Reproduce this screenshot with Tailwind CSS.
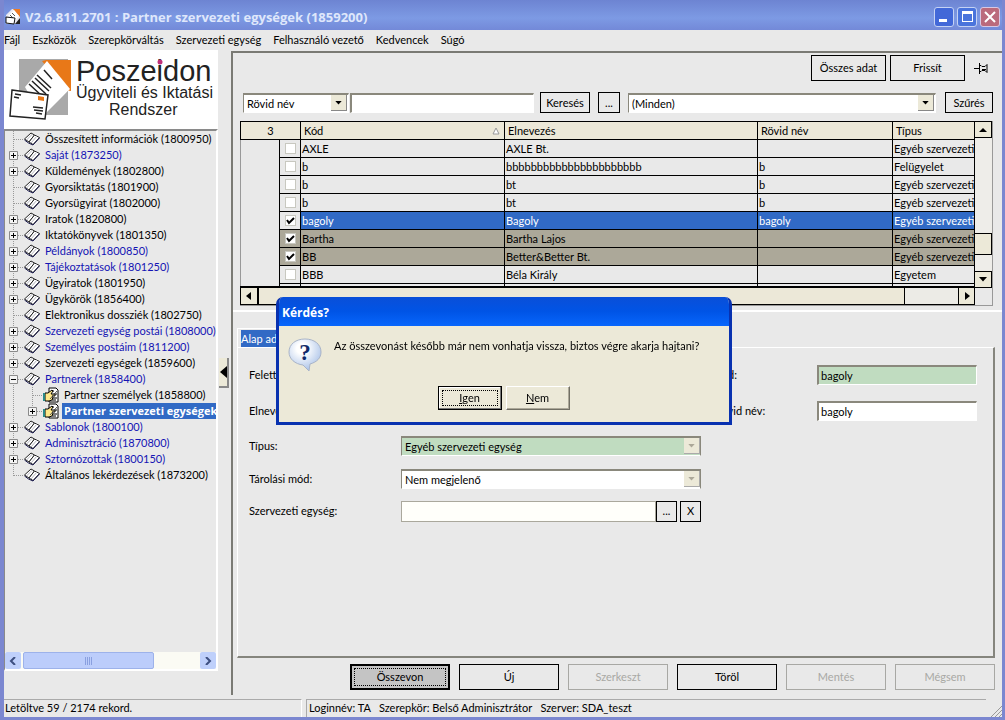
<!DOCTYPE html>
<html lang="hu">

<head>
    <meta charset="UTF-8">
    <meta name="viewport" content="width=device-width, initial-scale=1.0">
    <title>Partner szervezeti egységek</title>
    <script src="https://cdn.jsdelivr.net/npm/@tailwindcss/browser@4"></script>
</head>

<body class="h-screen flex flex-col overflow-hidden bg-[#e9e9e9] border-l-4 border-r-3 border-b-3 border-[#7b87d0] font-[Lato,sans-serif] text-[11px] leading-4 text-black">
    <svg class="hidden">
        <symbol id="book" viewBox="0 0 16 14">
            <path d="M.500 7 7 1l3.500 2L5 10z" fill="#fff" stroke="#222" />
            <path d="m5 10 5.500-7 5 2.500-6.500 7z" fill="#fff" stroke="#222" />
            <path d="m2.500 8 6-6M7 11l6-7" stroke="#b5b5bd" fill="none" />
            <path d="m.500 8 4 3 4.500 2 6.500-7" fill="none" stroke="#1c1c50" />
        </symbol>
        <symbol id="hand" viewBox="0 0 16 16">
            <path d="M6 1h7l2 2v12H6z" fill="#fff" stroke="#000" />
            <path d="M8 4h3M11 7h3M10 11h4M9 13h4" stroke="#000" />
            <path d="M2 6h3l4-3 1 1-2 3h4v2H9l1 1-1 3-3 1H2z" fill="#ffe98a" stroke="#000" />
            <path d="M0 6h2v8H0z" fill="#2a8a8a" />
            <path d="m7 12 7-8" stroke="#555" />
        </symbol>
        <symbol id="node-leaf" viewBox="0 0 19 16">
            <path d="M8.500 0v16M9 8.500h10" stroke="#999" stroke-dasharray="1 1" />
        </symbol>
        <symbol id="node-last" viewBox="0 0 19 16">
            <path d="M8.500 0v9M9 8.500h10" stroke="#999" stroke-dasharray="1 1" />
        </symbol>
        <symbol id="node-line" viewBox="0 0 19 16">
            <path d="M8.500 0v16" stroke="#999" stroke-dasharray="1 1" />
        </symbol>
        <symbol id="node-plus" viewBox="0 0 19 16">
            <path d="M8.500 0v16M9 8.500h10" stroke="#999" stroke-dasharray="1 1" />
            <path d="M4.500 4.500h8v8h-8z" fill="#f4f4f4" stroke="#8a8a8a" />
            <path d="M6 8.500h5M8.500 6v5" stroke="#000" />
        </symbol>
        <symbol id="node-minus" viewBox="0 0 19 16">
            <path d="M8.500 0v16M9 8.500h10" stroke="#999" stroke-dasharray="1 1" />
            <path d="M4.500 4.500h8v8h-8z" fill="#f4f4f4" stroke="#8a8a8a" />
            <path d="M6 8.500h5" stroke="#000" />
        </symbol>
        <symbol id="down" viewBox="0 0 8 5">
            <path d="M0 0h8L4 4.500z" fill="currentColor" />
        </symbol>
    </svg>

    <!-- title bar -->
    <header class="-ml-1 -mr-[3px] h-[30px] shrink-0 flex items-center pl-[5px] pr-[5px] pt-[3px] bg-linear-to-b from-[#6d84d2] via-[#7d9ae4] via-60% to-[#7389d8]">
        <svg class="w-4 h-4 mr-1" viewBox="0 0 16 16">
            <path d="M1 6 7 0h8v15H1z" fill="#e8e8f0" />
            <path d="M8 0h7v8z" fill="#ee7a22" />
            <path d="m3 7 6-6 5 6-5 6z" fill="#fff" />
            <path d="m5 6 3 3M7 4l3 3" stroke="#555" />
            <path d="m1 8 9 1-1 6-8-1z" fill="#fff" stroke="#111" />
            <path d="M10 15h5V9z" fill="#222" />
        </svg>
        <h1 class="flex-1 font-['Open_Sans',sans-serif] text-[13px] font-bold text-[#dfe7fb] whitespace-nowrap">V2.6.811.2701 : Partner szervezeti egységek (1859200)</h1>
        <div class="flex gap-[3px]">
            <button aria-label="Kis méret" class="w-5 h-5 rounded-[3px] border border-[#c5d2f4] bg-[#4268d8] flex items-end p-1"><span class="w-2 h-[3px] bg-white"></span></button>
            <button aria-label="Teljes méret" class="w-5 h-5 rounded-[3px] border border-[#c5d2f4] bg-[#4a74dc] flex items-center justify-center"><span class="w-[11px] h-[11px] border border-t-3 border-white"></span></button>
            <button aria-label="Bezárás" class="w-5 h-5 rounded-[3px] border border-[#d8c8e4] bg-[#bb6a7c] flex items-center justify-center">
                <svg class="w-3 h-3" viewBox="0 0 12 12"><path d="m1 1 10 10M11 1 1 11" stroke="#fff" stroke-width="2" /></svg>
            </button>
        </div>
    </header>

    <nav class="h-5 shrink-0 flex items-center gap-3 whitespace-nowrap">
        <a href="#">Fájl</a>
        <a href="#">Eszközök</a>
        <a href="#">Szerepkörváltás</a>
        <a href="#">Szervezeti egység</a>
        <a href="#">Felhasználó vezető</a>
        <a href="#">Kedvencek</a>
        <a href="#">Súgó</a>
    </nav>

    <main class="flex-1 min-h-0 flex pb-1">
        <!-- left side: logo and menu tree -->
        <aside class="w-[214px] shrink-0 flex flex-col pb-6">
            <div class="h-[79px] shrink-0 bg-white">
                <svg class="w-full h-[79px]" viewBox="0 0 214 79" font-family="Liberation Sans, Arial, sans-serif" fill="#222">
                    <path d="M15 9h49v56H15z" fill="#a9a9a9" />
                    <path d="M38 11 42 10h25v31l-6-1z" fill="#e87818" />
                    <path d="m21 37 22-26 23 28-26 26-10-12z" fill="#fff" />
                    <path d="M64 41v24H42z" fill="#a9a9a9" />
                    <path d="m25 34 13 12M28 31l14 13M31 28l14 13M33 25l14 13M40 20l8 9" stroke="#222" stroke-width="1.500" />
                    <path d="m8 40 36 5-3 24-35-3z" fill="#fff" stroke="#222" stroke-width="1.500" />
                    <path d="m11 44 6 1M10 47l5 1M29 57l10 1M30 60l9 1M32 63l6 1" stroke="#222" stroke-width="1.500" />
                    <path d="m34 46 6 1v4l-6-1z" fill="#e87818" />
                    <text x="72" y="31" font-size="29">Poszeidon</text>
                    <circle cx="156" cy="12" r="2.500" fill="#c0307a" />
                    <text x="72" y="48" font-size="16">Ügyviteli és Iktatási</text>
                    <text x="105" y="65" font-size="16">Rendszer</text>
                </svg>
            </div>
            <div class="flex-1 min-h-0 flex flex-col border-t-2 border-l border-[#8a8a8a] border-r-2 border-r-white border-b-2 border-b-white">
                <ul id="tree" class="flex-1 min-h-0 overflow-hidden whitespace-nowrap"></ul>
                <div class="h-[17px] shrink-0 flex bg-[#fbfbf4]">
                    <button aria-label="Balra" class="w-4 rounded-[2px] bg-[#bfd0fb] flex items-center justify-center">
                        <svg class="w-2 h-2" viewBox="0 0 8 8"><path d="M6 0 2 4l4 4" fill="none" stroke="#3d4f80" stroke-width="2" /></svg>
                    </button>
                    <div class="ml-0.5 w-[131px] rounded-[2px] border border-[#9db2ea] bg-[#bccdfb] flex items-center justify-center gap-px">
                        <span class="w-px h-2 bg-[#8aa0e0]"></span>
                        <span class="w-px h-2 bg-[#8aa0e0]"></span>
                        <span class="w-px h-2 bg-[#8aa0e0]"></span>
                        <span class="w-px h-2 bg-[#8aa0e0]"></span>
                    </div>
                    <button aria-label="Jobbra" class="ml-auto w-4 rounded-[2px] bg-[#bfd0fb] flex items-center justify-center">
                        <svg class="w-2 h-2" viewBox="0 0 8 8"><path d="m2 0 4 4-4 4" fill="none" stroke="#3d4f80" stroke-width="2" /></svg>
                    </button>
                </div>
            </div>
        </aside>

        <div class="w-[13px] shrink-0 flex items-center">
            <button aria-label="Menü elrejtése" class="ml-px w-[10px] h-[30px] border-r-2 border-b-2 border-[#888] bg-[#ece9d8] flex items-center justify-center">
                <svg class="w-[7px] h-3" viewBox="0 0 7 12"><path d="M7 0v12L0 6z" /></svg>
            </button>
        </div>

        <section class="flex-1 min-w-0 mt-px flex flex-col border-t-2 border-l-2 border-[#7a7a74]">
            <!-- search and result list -->
            <div class="h-[259px] shrink-0 pl-[7px] pr-[9px] border-b-2 border-white">
                <div class="h-[29px] flex items-center justify-end gap-1">
                    <button class="w-[75px] h-[26px] border border-black">Összes adat</button>
                    <button class="w-[75px] h-[26px] border border-black">Frissít</button>
                    <button aria-label="Rögzítés" class="ml-1 mr-1 w-4 h-4">
                        <svg class="w-4 h-4" viewBox="0 0 16 16" fill="none" stroke="#000">
                            <path d="M1 8.500h5M6.500 3v11M6 5.500h2l1 1h3l2-2v8l-2-2H9l-1 1H6M9 9.500h4" />
                        </svg>
                    </button>
                </div>
                <div class="h-[31px] flex items-end pl-[3px] mb-2">
                    <div class="relative w-[106px] shrink-0">
                        <select aria-label="Keresés mezője" class="block appearance-none w-full h-5 pl-[3px] bg-white border-t-2 border-l border-[#8a887c] border-r border-r-white border-b border-b-white">
                            <option>Rövid név</option>
                        </select>
                        <span class="absolute right-0.5 top-0.5 w-4 h-4 bg-[#ece9d8] border-r border-b border-[#888] flex items-center justify-center pointer-events-none"><svg class="w-[7px] h-1"><use href="#down" /></svg></span>
                    </div>
                    <input type="text" aria-label="Keresett szöveg" class="ml-px w-[184px] h-5 px-1 bg-white border-t-2 border-l-2 border-[#8a887c] border-r border-r-white border-b border-b-white">
                    <button class="ml-[6px] w-[50px] h-[21px] shrink-0 border border-black">Keresés</button>
                    <button class="ml-2 w-[22px] h-[21px] shrink-0 border border-black">...</button>
                    <div class="relative ml-2 flex-1">
                        <select aria-label="Szűrő" class="block appearance-none w-full h-5 pl-[3px] bg-white border-t-2 border-l border-[#8a887c] border-r border-r-white border-b border-b-white">
                            <option>(Minden)</option>
                        </select>
                        <span class="absolute right-0.5 top-0.5 w-4 h-4 bg-[#ece9d8] border-r border-b border-[#888] flex items-center justify-center pointer-events-none"><svg class="w-[7px] h-1"><use href="#down" /></svg></span>
                    </div>
                    <button class="ml-[9px] w-12 h-[21px] shrink-0 border border-black">Szűrés</button>
                </div>

                <div class="flex border-b border-r border-[#999]">
                    <div class="flex-1 min-w-0">
                        <div class="h-[167px] overflow-hidden border-b-2 border-black">
                            <table class="w-full table-fixed border-collapse whitespace-nowrap text-left">
                                <colgroup>
                                    <col class="w-[39px]">
                                    <col class="w-[21px]">
                                    <col class="w-[204px]">
                                    <col>
                                    <col class="w-[135px]">
                                    <col class="w-[82px]">
                                </colgroup>
                                <thead class="bg-[#ece8d8]">
                                    <tr class="h-[18px]">
                                        <th colspan="2" class="border border-black p-0 text-center font-normal">3</th>
                                        <th class="border border-black px-[3px] py-0 font-normal">
                                            <span class="flex items-center justify-between">Kód
                                                <svg class="w-2 h-2 mr-px" viewBox="0 0 8 8"><path d="m4 1 3 6H1z" fill="#fff" stroke="#999" /></svg>
                                            </span>
                                        </th>
                                        <th class="border border-black px-[3px] py-0 font-normal">Elnevezés</th>
                                        <th class="border border-black px-[3px] py-0 font-normal">Rövid név</th>
                                        <th class="border border-black px-[3px] py-0 font-normal">Típus</th>
                                    </tr>
                                </thead>
                                <tbody id="partnerTable"></tbody>
                            </table>
                        </div>
                        <div class="h-[17px] flex border border-t-0 border-black bg-[#ecebe6]">
                            <button aria-label="Balra" class="w-[18px] shrink-0 border-r-2 border-black bg-[#ece9d8] flex items-center justify-center"><svg class="w-[6px] h-2" viewBox="0 0 6 8"><path d="M5 0v8L0 4z" /></svg></button>
                            <div class="flex-1 border-r border-black bg-[#ece8d8]"></div>
                            <div class="w-[53px] shrink-0"></div>
                            <button aria-label="Jobbra" class="w-4 shrink-0 border-l border-black bg-[#ece9d8] flex items-center justify-center"><svg class="w-[6px] h-2" viewBox="0 0 6 8"><path d="M1 0v8l5-4z" /></svg></button>
                        </div>
                    </div>
                    <div class="w-[17px] h-[167px] shrink-0 flex flex-col bg-[#eeede9]">
                        <button aria-label="Fel" class="h-[17px] border border-l-0 border-black bg-[#ece9d8] flex items-center justify-center"><svg class="w-2 h-1" viewBox="0 0 8 4"><path d="M0 4h8L4 0z" /></svg></button>
                        <div class="mt-auto h-[22px] border border-l-0 border-black bg-[#ece9d8]"></div>
                        <div class="h-4"></div>
                        <button aria-label="Le" class="h-[17px] border border-l-0 border-black bg-[#ece9d8] flex items-center justify-center"><svg class="w-2 h-[5px]"><use href="#down" /></svg></button>
                    </div>
                </div>
            </div>

            <!-- details of the chosen unit -->
            <form class="flex-1 min-h-0 flex flex-col mt-[16px] ml-1 mr-[7px]" onsubmit="return false">
                <div class="h-[19px] shrink-0 border-t border-l border-white w-[100px] pt-px pl-[3px]"><button type="button" class="block w-full h-[18px] text-left bg-[#316ac5] text-white whitespace-nowrap">Alap adatok</button></div>
                <div class="flex-1 border-t border-l border-t-white border-l-white border-r-2 border-b-2 border-r-[#85857d] border-b-[#85857d]">
                    <div class="grid grid-cols-[152px_minmax(0,1fr)_116px_160px] grid-rows-[36px_36px_34px_32px_32px] items-center pl-[11px] pr-4 pt-[9px]">
                        <label for="parent">Felettes:</label>
                        <input id="parent" type="text" class="h-5 px-[2px] bg-[#c0dcc0] border-t-2 border-l-2 border-[#8a887c]">
                        <label for="code" class="pl-[14px]">Kód:</label>
                        <input id="code" type="text" value="bagoly" class="h-5 w-full pl-[2px] bg-[#c0dcc0] border-t-2 border-l-2 border-[#8a887c] border-r border-r-white border-b border-b-white">

                        <label for="name">Elnevezés:</label>
                        <input id="name" type="text" class="h-5 px-[2px] bg-white border-t-2 border-l-2 border-[#8a887c]">
                        <label for="short" class="pl-[14px]">Rövid név:</label>
                        <input id="short" type="text" value="bagoly" class="h-5 w-full pl-[2px] bg-white border-t-2 border-l-2 border-[#8a887c] border-r border-r-white border-b border-b-white">

                        <label for="type">Típus:</label>
                        <div class="relative">
                            <select id="type" class="block appearance-none w-full h-5 pl-[3px] bg-[#c0dcc0] border-t-2 border-l border-[#8a887c] border-r border-b border-b-white">
                                <option>Egyéb szervezeti egység</option>
                            </select>
                            <span class="absolute right-px top-0.5 w-4 h-4 bg-[#ece9d8] border-r border-b border-[#aaa] text-[#aca899] flex items-center justify-center pointer-events-none"><svg class="w-[7px] h-1"><use href="#down" /></svg></span>
                        </div>
                        <span class="col-span-2"></span>

                        <label for="storage">Tárolási mód:</label>
                        <div class="relative">
                            <select id="storage" class="block appearance-none w-full h-5 pl-[3px] bg-white border-t-2 border-l border-[#8a887c] border-r border-b border-b-white">
                                <option>Nem megjelenő</option>
                            </select>
                            <span class="absolute right-px top-0.5 w-4 h-4 bg-[#ece9d8] border-r border-b border-[#aaa] text-[#aca899] flex items-center justify-center pointer-events-none"><svg class="w-[7px] h-1"><use href="#down" /></svg></span>
                        </div>
                        <span class="col-span-2"></span>

                        <label for="unit">Szervezeti egység:</label>
                        <div class="flex">
                            <input id="unit" type="text" class="flex-1 min-w-0 h-[21px] px-1 bg-[#fffffa] border border-[#aaa89c]">
                            <button type="button" class="w-[21px] h-[21px] border border-black">...</button>
                            <button type="button" class="ml-[3px] w-[21px] h-[21px] border border-black">X</button>
                        </div>
                        <span class="col-span-2"></span>
                    </div>
                </div>
                <div class="h-[37px] shrink-0 flex items-start justify-end gap-[9px] pt-[6px]">
                    <button class="w-[100px] h-[26px] border-2 border-black bg-[#c4c4c4] p-0.5"><span class="flex h-full items-center justify-center border border-dotted border-black">Összevon</span></button>
                    <button class="w-[100px] h-[26px] border border-black">Új</button>
                    <button disabled class="w-[100px] h-[26px] border border-[#a8a8a4] text-[#a8a8a4]">Szerkeszt</button>
                    <button class="w-[100px] h-[26px] border border-black">Töröl</button>
                    <button disabled class="w-[100px] h-[26px] border border-[#a8a8a4] text-[#a8a8a4]">Mentés</button>
                    <button disabled class="w-[100px] h-[26px] border border-[#a8a8a4] text-[#a8a8a4]">Mégsem</button>
                </div>
            </form>
        </section>
    </main>

    <footer class="h-[18px] shrink-0 flex gap-1 whitespace-nowrap">
        <p class="w-[298px] pl-px border-t border-[#aaa] border-r border-r-white">Letöltve 59 / 2174 rekord.</p>
        <p class="flex-1 pl-0.5 border-t border-l border-[#aaa]">Loginnév: TA &nbsp; Szerepkör: Belső Adminisztrátor &nbsp; Szerver: SDA_teszt</p>
        <svg class="w-3 h-3 self-end" viewBox="0 0 12 12"><path d="M1 12 12 1M5 12l7-7M9 12l3-3" stroke="#999" /></svg>
    </footer>

    <!-- question box over the window -->
    <div class="fixed inset-0 flex items-center justify-center pl-[3px] pt-[2px]">
        <div role="dialog" aria-labelledby="questionTitle" class="w-[456px] h-[128px] flex flex-col rounded-t-[7px] border-3 border-t-0 border-[#0831b0] bg-[#ece9d8] overflow-hidden">
            <h2 id="questionTitle" class="-mx-[3px] h-[29px] shrink-0 pl-[6px] pt-[7px] font-['Open_Sans',sans-serif] text-[12px] leading-[18px] font-bold text-white bg-linear-to-b from-[#0a4fd8] via-[#0054e6] to-[#0866fc]">Kérdés?</h2>
            <div class="flex-1 flex pl-[9px] pt-[11px]">
                <svg class="w-9 h-9 shrink-0" viewBox="0 0 36 36">
                    <defs>
                        <radialGradient id="bubble" cx=".4" cy=".3" r=".8"><stop offset=".2" stop-color="#fff" /><stop offset="1" stop-color="#9cb8e4" /></radialGradient>
                    </defs>
                    <path d="M17 2c9 0 16 5 16 13 0 6-4 10-11 12l-1 7-6-6C7 27 1 22 1 15 1 7 8 2 17 2z" fill="url(#bubble)" stroke="#a9b4c8" />
                    <text x="17" y="23" text-anchor="middle" font-family="Liberation Serif, serif" font-weight="700" font-size="23" fill="#102a6a">?</text>
                </svg>
                <p class="ml-[10px] mt-px whitespace-nowrap">Az összevonást később már nem vonhatja vissza, biztos végre akarja hajtani?</p>
            </div>
            <div class="flex justify-center gap-1 pb-3 -ml-px">
                <button class="w-[64px] h-6 border border-black p-[3px] shadow-[inset_-1px_-1px_0_#777,inset_1px_1px_0_#fff]"><span class="flex h-full items-center justify-center border border-dotted border-black leading-3"><u>I</u>gen</span></button>
                <button class="w-[64px] h-6 border border-t-white border-l-white border-r-[#716f64] border-b-[#716f64] shadow-[inset_-1px_-1px_0_#aca899]"><u>N</u>em</button>
            </div>
        </div>
    </div>

    <script>
        const menu = [
            ["Összesített információk (1800950)", "leaf"],
            ["Saját (1873250)", "plus", "blue"],
            ["Küldemények (1802800)", "plus"],
            ["Gyorsiktatás (1801900)", "leaf"],
            ["Gyorsügyirat (1802000)", "leaf"],
            ["Iratok (1820800)", "plus"],
            ["Iktatókönyvek (1801350)", "plus"],
            ["Példányok (1800850)", "plus", "blue"],
            ["Tájékoztatások (1801250)", "plus", "blue"],
            ["Ügyiratok (1801950)", "plus"],
            ["Ügykörök (1856400)", "plus"],
            ["Elektronikus dossziék (1802750)", "leaf"],
            ["Szervezeti egység postái (1808000)", "plus", "blue"],
            ["Személyes postáim (1811200)", "plus", "blue"],
            ["Szervezeti egységek (1859600)", "plus"],
            ["Partnerek (1858400)", "minus", "blue"],
            ["Partner személyek (1858800)", "leaf", "child"],
            ["Partner szervezeti egységek (1859200)", "plus", "selected"],
            ["Sablonok (1800100)", "plus", "blue"],
            ["Adminisztráció (1870800)", "plus", "blue"],
            ["Sztornózottak (1800150)", "plus", "blue"],
            ["Általános lekérdezések (1873200)", "last"]
        ];
        const linkClass = {
            blue: "ml-[5px] text-[#1414b4]",
            child: "ml-[5px]",
            selected: "ml-[3px] pl-[2px] flex-1 bg-[#316ac5] text-white font-['Open_Sans',sans-serif] font-bold"
        };

        document.getElementById("tree").innerHTML = menu.map(([title, node, kind]) => {
            const child = kind === "child" || kind === "selected";
            return `
                <li class="flex items-center h-4">
                    ${child ? '<svg class="w-[19px] h-4 shrink-0"><use href="#node-line" /></svg>' : ""}
                    <svg class="w-[19px] h-4 shrink-0"><use href="#node-${node}" /></svg>
                    <svg class="w-4 h-4 shrink-0"><use href="#${child ? "hand" : "book"}" /></svg>
                    <a href="#" class="${linkClass[kind] || "ml-[5px]"}">${title}</a>
                </li>`;
        }).join("");

        const partners = [
            ["AXLE", "AXLE Bt.", "", "Egyéb szervezeti"],
            ["b", "bbbbbbbbbbbbbbbbbbbbbb", "b", "Felügyelet"],
            ["b", "bt", "b", "Egyéb szervezeti"],
            ["b", "bt", "b", "Egyéb szervezeti"],
            ["bagoly", "Bagoly", "bagoly", "Egyéb szervezeti", "current"],
            ["Bartha", "Bartha Lajos", "", "Egyéb szervezeti", "marked"],
            ["BB", "Better&amp;Better Bt.", "", "Egyéb szervezeti", "marked"],
            ["BBB", "Béla Király", "", "Egyetem"],
            ["", "", "", ""]
        ];
        const rowClass = {
            current: "bg-[#316ac5] text-white",
            marked: "bg-[#aca899]"
        };

        document.getElementById("partnerTable").innerHTML = partners.map(([code, name, short, type, state]) => `
            <tr class="h-[18px] ${rowClass[state] || ""}">
                <td class="p-0 bg-[#e9e9e9] border-l border-[#999]"></td>
                <td class="p-0 border border-black ${state === "current" ? "bg-[#e9e9e9]" : ""}">
                    <input type="checkbox" aria-label="${code}" ${state ? "checked" : ""} class="peer sr-only">
                    <svg class="mx-auto w-[11px] h-[11px] bg-white border border-[#c8c8c0] text-transparent peer-checked:text-black" viewBox="0 0 9 9"><path d="m1 4 2 3 5-5" fill="none" stroke="currentColor" stroke-width="2" /></svg>
                </td>
                <td class="border border-black px-px py-0">${code}</td>
                <td class="border border-black px-px py-0">${name}</td>
                <td class="border border-black px-px py-0">${short}</td>
                <td class="border border-black px-px py-0 overflow-hidden">${type}</td>
            </tr>`).join("");
    </script>
</body>

</html>
